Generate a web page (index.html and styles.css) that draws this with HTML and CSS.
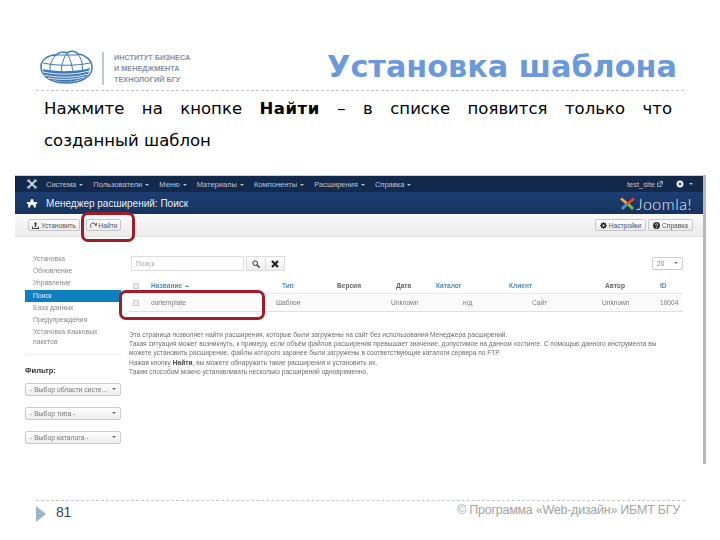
FILE: index.html
```html
<!DOCTYPE html>
<html lang="ru">
<head>
<meta charset="utf-8">
<title>Установка шаблона</title>
<link rel="stylesheet" href="styles.css">
</head>
<body>
<div class="slide">
  <header class="head">
    <div class="logo">
      <svg class="globe" width="56" height="36" viewBox="0 0 56 36" fill="none" stroke="#3f78b5" stroke-width="1">
        <path d="M3 18C2 10 10 5 18 5c3-3 8-4 11-2 3-3 9-2 11 1 8 1 15 7 14 15-1 8-11 14-26 14C14 33 4 27 3 18z" stroke-width="1.500"/>
        <path d="M18 5C12 11 10 20 14 31M29 3C24 10 22 20 24 33M29 3c4 7 7 17 6 30M40 4c5 7 6 17 3 27M5 13c14 3 32 3 47 0M14 5l26 0"/>
        <path d="M5 19c12 3 34 3 47-1l-2 7c-5 4-13 7-22 7-9 0-17-3-22-7z" fill="#3f78b5" stroke="none"/>
        <path d="M5 22c14 3 32 3 46-1M6 25c14 3 31 3 44-1M10 28c12 2 25 2 36-1" stroke="#dfeaf4" stroke-width="1"/>
      </svg>
      <div class="logo-text">
        <span>ИНСТИТУТ БИЗНЕСА</span>
        <span>И МЕНЕДЖМЕНТА</span>
        <span>ТЕХНОЛОГИЙ БГУ</span>
      </div>
    </div>
    <h1 class="title">Установка шаблона</h1>
  </header>
  <p class="lead"><span class="lead-first">Нажмите на кнопке <b>Найти</b> – в списке появится только что</span><span class="lead-rest">созданный шаблон</span></p>

  <div class="shot">
    <div class="shot-inner">
      <nav class="nav">
        <svg class="nav-mark" width="10" height="10" viewBox="0 0 10 10" fill="none" stroke="#cfd7e3" stroke-width="1.800"><path d="M2 2l6 6M8 2L2 8"/><path d="M1 3V1h2M7 1h2v2M9 7v2H7M3 9H1V7" stroke-width="1.200"/></svg>
        <span class="nav-item">Система <i class="caret"></i></span>
        <span class="nav-item">Пользователи <i class="caret"></i></span>
        <span class="nav-item">Меню <i class="caret"></i></span>
        <span class="nav-item">Материалы <i class="caret"></i></span>
        <span class="nav-item">Компоненты <i class="caret"></i></span>
        <span class="nav-item">Расширения <i class="caret"></i></span>
        <span class="nav-item">Справка <i class="caret"></i></span>
        <span class="nav-site">test_site
          <svg width="6" height="6" viewBox="0 0 6 6" fill="none" stroke="#b8c4d6" stroke-width=".8"><path d="M4 3.500V5.500H.5V2H2.500M2.500.5h3v3M5.500.5L2.500 3.500"/></svg>
        </span>
        <span class="nav-gear">
          <svg width="8" height="8" viewBox="0 0 8 8"><circle cx="4" cy="4" r="2.400" fill="none" stroke="#e6e9ef" stroke-width="1.600"/><path d="M4 0v8M0 4h8M1.200 1.200l5.600 5.600M6.800 1.200L1.200 6.800" stroke="#e6e9ef" stroke-width="1"/><circle cx="4" cy="4" r="1" fill="#13294b"/></svg>
          <i class="caret"></i>
        </span>
      </nav>
      <div class="banner">
        <svg width="10" height="10" viewBox="0 0 10 10"><path d="M3.500 2.500a1.500 1.500 0 1 1 3 0V4H10v2H8.800v3.500h-2V8.500a1.800 1.800 0 0 0-3.600 0v1h-2V6H0V4h3.500z" fill="#fff"/></svg>
        <span class="banner-title">Менеджер расширений: Поиск</span>
        <span class="brand">
          <svg width="17" height="15" viewBox="0 0 17 15" fill="none" stroke-width="2.800"><path d="M2 2.500l6 5" stroke="#f9a541"/><path d="M15 2.500l-6 5" stroke="#f44321"/><path d="M3 13l5-5" stroke="#5091cd"/><path d="M14 13L9 8" stroke="#7ac143"/></svg>
          <span class="brand-name">Joomla!</span>
        </span>
      </div>
      <div class="toolbar">
        <span class="btn btn-install">
          <svg width="7" height="7" viewBox="0 0 7 7"><path d="M3.500 0L1.500 2.200h1.300V5h1.400V2.200h1.300zM0 4.500h1V6h5V4.500h1V7H0z" fill="#444"/></svg>
          Установить</span>
        <span class="btn btn-find">
          <svg width="7" height="7" viewBox="0 0 7 7" fill="none"><path d="M1 5.500A2.700 2.700 0 0 1 5.300 2" stroke="#444" stroke-width=".9"/><path d="M6.800.6v2.900H3.900z" fill="#444"/></svg>
          Найти</span>
        <span class="spring"></span>
        <span class="btn btn-settings">
          <svg width="7" height="7" viewBox="0 0 8 8"><circle cx="4" cy="4" r="2.400" fill="none" stroke="#333" stroke-width="1.600"/><path d="M4 0v8M0 4h8M1.200 1.200l5.600 5.600M6.800 1.200L1.200 6.800" stroke="#333"/><circle cx="4" cy="4" r="1" fill="#fff"/></svg>
          Настройки</span>
        <span class="btn btn-help">
          <svg width="7" height="7" viewBox="0 0 7 7"><circle cx="3.500" cy="3.500" r="3.500" fill="#333"/><path d="M2.400 2.700c0-1.300 2.200-1.300 2.200 0 0 .8-1.100.8-1.100 1.500" fill="none" stroke="#fff" stroke-width=".7"/><circle cx="3.500" cy="5.300" r=".5" fill="#fff"/></svg>
          Справка</span>
      </div>
      <div class="content">
        <aside class="side">
          <ul class="menu">
            <li>Установка</li>
            <li>Обновление</li>
            <li>Управление</li>
            <li class="active">Поиск</li>
            <li>База данных</li>
            <li>Предупреждения</li>
            <li>Установка языковых пакетов</li>
          </ul>
          <div class="filter-title">Фильтр:</div>
          <div class="select">- Выбор области систе...</div>
          <div class="select">- Выбор типа -</div>
          <div class="select">- Выбор каталога -</div>
        </aside>
        <main class="main">
          <div class="search">
            <span class="search-input">Поиск</span>
            <span class="search-btns">
              <span class="sq"><svg width="8" height="8" viewBox="0 0 8 8" fill="none" stroke="#333" stroke-width="1"><circle cx="3.200" cy="3.200" r="2.300"/><path d="M5 5l2.600 2.600" stroke-width="1.400"/></svg></span>
              <span class="sq"><svg width="8" height="8" viewBox="0 0 8 8" fill="none" stroke="#222" stroke-width="2.200"><path d="M1 1l6 6M7 1L1 7"/></svg></span>
            </span>
            <span class="limit">20 <i class="caret caret-dark"></i></span>
          </div>
          <div class="row thead">
            <span class="check"></span>
            <span class="link">Название <i class="caret-up"></i></span>
            <span class="link">Тип</span>
            <span>Версия</span>
            <span>Дата</span>
            <span class="link">Каталог</span>
            <span class="link">Клиент</span>
            <span>Автор</span>
            <span class="link">ID</span>
          </div>
          <div class="row tbody">
            <span class="check"></span>
            <span>ourtemplate</span>
            <span>Шаблон</span>
            <span>Unknown</span>
            <span>н/д</span>
            <span>Сайт</span>
            <span>Unknown</span>
            <span>10004</span>
          </div>
          <div class="note">
            <p>Эта страница позволяет найти расширения, которые были загружены на сайт без использования Менеджера расширений.</p>
            <p>Такая ситуация может возникнуть, к примеру, если объём файлов расширения превышает значение, допустимое на данном хостинге. С помощью данного инструмента вы</p>
            <p>можете установить расширение, файлы которого заранее были загружены в соответствующие каталоги сервера по FTP.</p>
            <p>Нажав кнопку <b>Найти</b>, вы можете обнаружить такие расширения и установить их.</p>
            <p>Таким способом можно устанавливать несколько расширений одновременно.</p>
          </div>
        </main>
      </div>
    </div>
  </div>

  <footer class="foot">
    <span class="arrow"></span>
    <span class="num">81</span>
    <span class="copy">© Программа «Web-дизайн» ИБМТ БГУ</span>
  </footer>

  <div class="mark mark-btn"></div>
  <div class="mark mark-row"></div>
</div>
</body>
</html>
```

FILE: styles.css
```css
* { box-sizing: border-box; }
html, body { margin: 0; padding: 0; background: #fff; }
.slide { position: relative; width: 720px; height: 540px; overflow: hidden; font-family: "Liberation Sans", Arial, sans-serif; display: flex; flex-direction: column; }

.head { margin: 0 36px; height: 91px; padding: 50px 7px 0 2px; display: flex; justify-content: space-between; align-items: flex-start; border-bottom: 1px dashed #c4c8cc; }
.logo { display: flex; align-items: flex-start; }
.logo-text { margin-left: 8px; padding-left: 10px; height: 33px; margin-top: 2px; border-left: 2px solid #bcc9d8; display: flex; flex-direction: column; justify-content: space-between; font-size: 7.3px; font-weight: 700; line-height: 11px; color: #8492a5; }
.title { margin: -5px 0 0; font-family: "DejaVu Sans", Verdana, sans-serif; font-size: 30.3px; line-height: 44px; font-weight: 700; color: #6c98dc; white-space: nowrap; }

.lead { margin: 2px 48px 0 44px; font-family: "DejaVu Sans", Verdana, sans-serif; font-size: 16.5px; line-height: 32px; color: #000; height: 82px; }
.lead b { letter-spacing: .5px; }
.lead-first { display: block; text-align: justify; text-align-last: justify; }
.lead-rest { display: block; }

.shot { margin-left: 15px; width: 691px; height: 289px; border-right: 3px solid #b9b9b9; filter: blur(.45px); }
.shot-inner { height: 100%; border-top: 1px solid #ccc; }
.nav { height: 16px; background: #13294b; display: flex; align-items: center; padding-left: 12px; color: #b8c4d6; font-size: 7.5px; white-space: nowrap; }
.nav-mark { margin-right: 9px; }
.nav-item { margin-right: 10px; }
.nav-site { margin-left: auto; margin-right: 13px; }
.nav-gear { margin-right: 10px; display: flex; align-items: center; gap: 4px; }
.caret { display: inline-block; width: 0; height: 0; margin: 0 0 1px 1px; border-style: solid; border-width: 2px 2px 0; border-color: #b8c4d6 transparent transparent; }
.caret-dark { border-color: #777 transparent transparent; margin-top: 4px; }
.caret-up { display: inline-block; width: 0; height: 0; margin: 0 0 1px 1px; border-style: solid; border-width: 0 2px 2px; border-color: transparent transparent #4f8fb5; }
.banner { height: 22px; background: linear-gradient(#1c3d70, #17345f); display: flex; align-items: center; padding-left: 12px; color: #fff; }
.banner-title { margin-left: 9px; font-size: 10px; color: #e8edf3; }
.brand { margin-left: auto; margin-right: 11px; display: flex; align-items: center; gap: 0; }
.brand-name { font-family: "Lato", sans-serif; font-weight: 300; font-size: 16px; color: #e6edf5; letter-spacing: .5px; }
.toolbar { height: 23px; padding: 5px 10px 0 13px; background: linear-gradient(#fafafa, #ececec); border-bottom: 1px solid #e2e2e2; display: flex; align-items: flex-start; gap: 2px; }
.btn { height: 12px; display: flex; align-items: center; justify-content: center; gap: 2px; font-size: 6.6px; color: #555; background: linear-gradient(#fff, #ebebeb); border: 1px solid #c8c8c8; border-radius: 2px; white-space: nowrap; }
.btn-install { width: 52px; }
.btn-find { width: 35px; margin-left: 4px; }
.btn-settings { width: 51px; }
.btn-help { width: 45px; }
.spring { flex: 1; }
.content { display: flex; }
.side { width: 96px; margin-left: 10px; padding-top: 16px; font-size: 6.8px; color: #888; flex: none; }
.menu { list-style: none; margin: 0; padding: 0 0 8px; border-bottom: 1px solid #f0f0f0; }
.menu li { padding: 0 8px; line-height: 12.2px; }
.menu li.active { background: #0f7fc1; color: #e8f3fa; }
.menu li:last-child { line-height: 9.4px; margin-top: 1px; }
.filter-title { margin-top: 11px; font-size: 7.6px; font-weight: 700; color: #333; line-height: 10px; }
.select { width: 96px; height: 13px; margin-top: 11px; padding: 0 4px; border: 1px solid #ccc; border-radius: 2px; font-size: 6.8px; line-height: 11px; color: #777; background: linear-gradient(#fff, #eee); position: relative; }
.select::after { content: ""; position: absolute; right: 4px; top: 4px; border-style: solid; border-width: 2.500px 2px 0; border-color: #666 transparent transparent; }
.filter-title + .select { margin-top: 7px; }

.main { flex: 1; margin-left: 8px; margin-right: 20px; padding-top: 19px; font-size: 6.6px; color: #777; }
.search { display: flex; align-items: center; height: 15px; padding-left: 2px; }
.search-input { width: 113px; height: 15px; line-height: 13px; padding: 0 4px; border: 1px solid #ddd; color: #aaa; font-size: 6.6px; }
.search-btns { display: flex; margin-left: 2px; }
.sq { width: 20px; height: 15px; display: flex; align-items: center; justify-content: center; border: 1px solid #ddd; background: linear-gradient(#fff, #eee); margin-right: -1px; }
.limit { margin-left: auto; width: 31px; height: 13px; line-height: 11px; padding: 0 4px; border: 1px solid #ccc; border-radius: 2px; color: #888; display: flex; justify-content: space-between; }
.row { display: grid; align-items: center; white-space: nowrap; }
.thead { height: 15px; margin-top: 7px; font-weight: 700; color: #666; grid-template-columns: 22px 131px 55px 59px 40px 73px 96px 55px 1fr; }
.tbody { height: 19px; border-top: 1px solid #ececec; border-bottom: 1px solid #e0e0e0; background: #fbfbfb; grid-template-columns: 22px 125px 115px 72px 69px 70px 58px 1fr; }
.check { width: 6px; height: 6px; border: 1px solid #ccc; background: #eee; margin-left: 4px; border-radius: 1px; }
.link { color: #4f8fb5; }
.note { margin-top: 18px; font-size: 6.6px; line-height: 9.2px; color: #6e6e6e; white-space: nowrap; }
.note p { margin: 0; }
.note b { color: #444; }

.foot { margin: 36px 35px 0 36px; height: 30px; border-top: 1px dashed #c4c8cc; display: flex; align-items: flex-start; padding: 2px 5px 0 0; }
.arrow { width: 0; height: 0; margin-top: 3px; border-style: solid; border-width: 8px 0 8px 10px; border-color: transparent transparent transparent #9fb4cd; }
.num { margin: 2px 0 0 10px; font-size: 14px; letter-spacing: -.4px; line-height: 14px; color: #444; }
.copy { margin-left: auto; font-size: 12.5px; letter-spacing: -.25px; line-height: 14px; color: #a3a3a3; }

.mark { position: absolute; border: 3px solid #a11c26; border-radius: 7px; }
.mark-btn { left: 81px; top: 212px; width: 54px; height: 30px; }
.mark-row { left: 119px; top: 290px; width: 146px; height: 30px; }
```
